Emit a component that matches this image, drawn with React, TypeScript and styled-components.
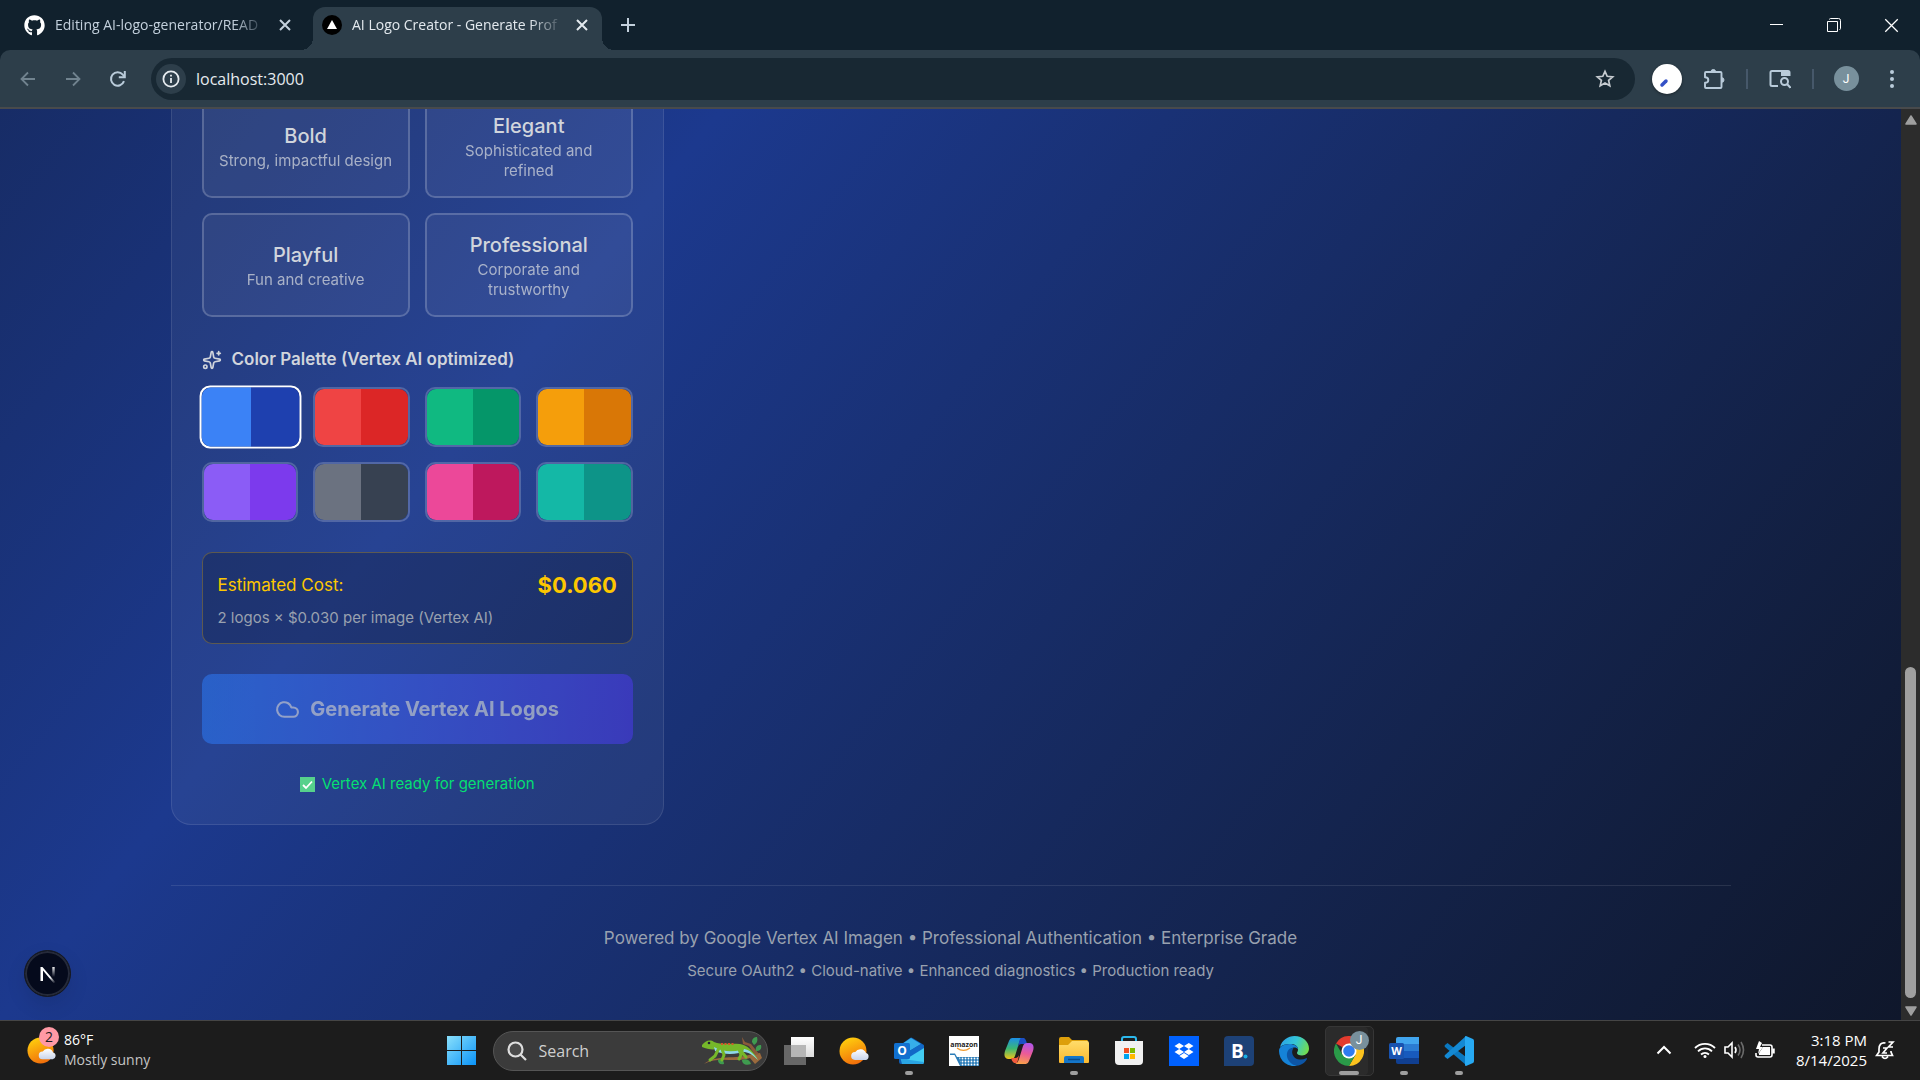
import React from "react";
import styled, { createGlobalStyle, css } from "styled-components";
import { Cloud, Sparkles } from "lucide-react";
import { FaGithub } from "react-icons/fa";

const uiFont = `"Open Sans", "Noto Sans", sans-serif`;
const pageFont = `Inter, "Noto Sans", sans-serif`;

const GlobalStyle = createGlobalStyle`
  *, *::before, *::after { box-sizing: border-box; }
  body { margin: 0; background: #1c1c1c; font-family: ${uiFont}; }
  button, input { font: inherit; color: inherit; margin: 0; padding: 0; border: 0; background: none; }
  svg { display: block; flex: none; }
  p, h2, h3 { margin: 0; font-weight: inherit; font-size: inherit; }
`;

const Screen = styled.div`
  display: flex;
  flex-direction: column;
  height: 100vh;
  overflow: hidden;
`;

/* ---------- Browser chrome ---------- */

const TabStrip = styled.header`
  display: flex;
  align-items: stretch;
  height: 50px;
  background: #11212d;
  color: #c3d0dc;
`;

const Tab = styled.div<{ $active?: boolean }>`
  position: relative;
  display: flex;
  align-items: center;
  gap: 10px;
  width: ${(p) => (p.$active ? 289 : 301)}px;
  margin: ${(p) => (p.$active ? "7px 0 0 0" : "0 0 0 12px")};
  padding: ${(p) => (p.$active ? "0 12px 7px 9px" : "0 20px 0 12px")};
  border-radius: 12px 12px 0 0;
  font-size: 14px;
  line-height: 20px;
  ${(p) =>
    p.$active &&
    css`
      background: #2d3e4a;
      color: #e3e9ee;
      &::before,
      &::after {
        content: "";
        position: absolute;
        bottom: 0;
        width: 12px;
        height: 12px;
      }
      &::before {
        right: 100%;
        background: radial-gradient(circle at 0 0, transparent 12px, #2d3e4a 12px);
      }
      &::after {
        left: 100%;
        background: radial-gradient(circle at 100% 0, transparent 12px, #2d3e4a 12px);
      }
    `}
`;

const TabTitle = styled.span`
  flex: 1;
  overflow: hidden;
  white-space: nowrap;
  mask-image: linear-gradient(to right, #000 84%, transparent);
`;

const PlainButton = styled.button<{ $w?: number }>`
  display: flex;
  align-items: center;
  justify-content: center;
  flex: none;
  width: ${(p) => p.$w ?? 30}px;
  height: 30px;
`;

const NewTab = styled(PlainButton)`
  align-self: center;
  margin-left: 11px;
`;

const WindowControls = styled.div`
  display: flex;
  align-items: center;
  margin-left: auto;
  color: #ffffff;
`;

const ToolbarFrame = styled.div`
  flex: none;
  background: #11212d;
`;

const Toolbar = styled.nav`
  display: flex;
  align-items: center;
  gap: 17px;
  height: 59px;
  padding: 0 14px 0 5px;
  border-bottom: 2px solid #484a4c;
  border-radius: 10px 10px 0 0;
  background: #2d3e4a;
  color: #b9cbda;
`;

const NavGroup = styled.div`
  display: flex;
  margin-right: -6px;
`;

const AddressBar = styled.div`
  display: flex;
  flex: 1;
  align-items: center;
  height: 42px;
  padding: 0 15px 0 5px;
  border-radius: 21px;
  background: #182833;
  color: #e6ebef;
`;

const SiteInfo = styled(PlainButton)`
  border-radius: 15px;
  background: #2d3e4a;
`;

const UrlInput = styled.input`
  flex: 1;
  min-width: 0;
  height: 30px;
  padding-left: 10px;
  outline: none;
  font-size: 16px;
`;

const Divider = styled.span`
  width: 2px;
  height: 20px;
  background: #46586a;
`;

const ExtensionButton = styled(PlainButton)`
  border-radius: 15px;
  background: #ffffff;
  box-shadow: 0 1px 3px rgba(0, 0, 0, 0.4);
`;

const Avatar = styled.span`
  display: flex;
  align-items: center;
  justify-content: center;
  width: 25px;
  height: 25px;
  border-radius: 50%;
  background: #78909c;
  color: #ffffff;
  font: 12px/20px Roboto, sans-serif;
`;

/* ---------- Web page ---------- */

const Viewport = styled.div`
  display: flex;
  flex: 1;
  min-height: 0;
`;

const Page = styled.main`
  position: relative;
  display: flex;
  flex: 1;
  flex-direction: column;
  justify-content: flex-end;
  overflow: hidden;
  background: #0f172b linear-gradient(to bottom right in oklab, #0f172b, #1c398e, #0f172b) bottom / 100%
    2396px no-repeat;
  font-family: ${pageFont};
  color: #d1d5dc;
`;

const Container = styled.div`
  width: 100%;
  max-width: 1600px;
  margin: 0 auto;
  padding: 0 20px;
`;

const Columns = styled.div`
  display: grid;
  grid-template-columns: repeat(3, 1fr);
  gap: 40px;
`;

const Card = styled.section`
  display: flex;
  flex-direction: column;
  gap: 30px;
  padding: 30px;
  border: 1px solid rgba(255, 255, 255, 0.1);
  border-radius: 20px;
  background: rgba(255, 255, 255, 0.05);
`;

const StyleGrid = styled.div`
  display: grid;
  grid-template-columns: repeat(2, 1fr);
  grid-auto-rows: 1fr;
  gap: 15px;
`;

const StyleTile = styled.button`
  padding: 15px 12px;
  border: 2px solid rgba(255, 255, 255, 0.2);
  border-radius: 10px;
  background: rgba(255, 255, 255, 0.05);
  text-align: center;
`;

const TileName = styled.span`
  display: block;
  font-size: 20px;
  font-weight: 500;
  line-height: 30px;
`;

const TileNote = styled.span`
  display: block;
  font-size: 15px;
  line-height: 20px;
  opacity: 0.75;
`;

const PaletteSection = styled.div`
  display: flex;
  flex-direction: column;
  gap: 15px;
`;

const PaletteTitle = styled.h3`
  display: flex;
  align-items: center;
  gap: 10px;
  font-size: 17px;
  font-weight: 600;
  line-height: 25px;
`;

const Swatches = styled.div`
  display: grid;
  grid-template-columns: repeat(4, 1fr);
  gap: 15px;
`;

const Swatch = styled.button<{ $selected: boolean }>`
  height: 60px;
  border: 2px solid ${(p) => (p.$selected ? "#ffffff" : "rgba(255, 255, 255, 0.2)")};
  border-radius: 10px;
  transform: ${(p) => (p.$selected ? "scale(1.05)" : "none")};
`;

const SwatchFill = styled.span<{ $from: string; $to: string }>`
  display: block;
  height: 100%;
  border-radius: 9px;
  background: linear-gradient(to right, ${(p) => p.$from} 50%, ${(p) => p.$to} 50%);
`;

const CostBox = styled.div`
  display: flex;
  flex-direction: column;
  gap: 5px;
  padding: 15px;
  border: 1px solid rgba(240, 177, 0, 0.3);
  border-radius: 10px;
  background: rgba(0, 0, 0, 0.2);
`;

const CostRow = styled.div`
  display: flex;
  align-items: center;
  justify-content: space-between;
  color: #fdc700;
  line-height: 35px;
`;

const CostLabel = styled.span`
  font-size: 17px;
`;

const CostValue = styled.strong`
  font-size: 22px;
  font-weight: 700;
`;

const CostNote = styled.p`
  font-size: 15px;
  line-height: 20px;
  color: #99a1af;
`;

const GenerateButton = styled.button`
  display: flex;
  align-items: center;
  justify-content: center;
  gap: 10px;
  padding: 20px;
  border-radius: 10px;
  background: linear-gradient(to right in oklab, #2b7fff, #4f39f6);
  color: #ffffff;
  font-size: 20px;
  font-weight: 700;
  line-height: 30px;
  opacity: 0.5;
`;

const ReadyNote = styled.p`
  display: flex;
  align-items: center;
  justify-content: center;
  gap: 7px;
  font-size: 15px;
  line-height: 20px;
  color: #05df72;
`;

const Footer = styled.footer`
  display: flex;
  flex-direction: column;
  gap: 10px;
  margin-top: 60px;
  padding: 40px 0 39px;
  border-top: 1px solid rgba(255, 255, 255, 0.1);
  text-align: center;
  color: #99a1af;
`;

const FooterLead = styled.p`
  font-size: 17px;
  line-height: 25px;
`;

const FooterNote = styled.p`
  font-size: 15px;
  line-height: 20px;
`;

const DevBadge = styled.button`
  position: absolute;
  bottom: 23px;
  left: 24px;
  display: flex;
  align-items: center;
  justify-content: center;
  width: 47px;
  height: 47px;
  border: 1px solid #17191f;
  border-radius: 50%;
  background: #050a1c;
  box-shadow: inset 0 0 0 2px #252a3a, 0 8px 20px rgba(0, 0, 0, 0.1);
`;

const Scrollbar = styled.div`
  display: flex;
  flex-direction: column;
  align-items: center;
  width: 19px;
  padding: 6px 0 4px;
  background: #2c2c2c;
`;

const ScrollTrack = styled.div`
  display: flex;
  flex: 1;
  flex-direction: column;
  justify-content: flex-end;
  margin: 2px 0 8px;
`;

const ScrollThumb = styled.div`
  width: 11px;
  height: 38%;
  border-radius: 6px;
  background: #9f9f9f;
`;

/* ---------- Taskbar ---------- */

const Taskbar = styled.footer`
  display: grid;
  grid-template-columns: 1fr auto 1fr;
  flex: none;
  height: 60px;
  border-top: 1px solid #454545;
  background: #1c1c1c;
  color: #ffffff;
`;

const Weather = styled.button`
  display: flex;
  align-items: center;
  justify-self: start;
  gap: 8px;
  height: 58px;
  padding-left: 27px;
  text-align: left;
  font-size: 14px;
  line-height: 20px;
`;

const WeatherIcon = styled.span`
  position: relative;
`;

const CountBadge = styled.span`
  position: absolute;
  top: -9px;
  left: 12px;
  width: 20px;
  height: 20px;
  border-radius: 50%;
  background: #ff99a4;
  color: #1c1c1c;
  text-align: center;
  font-size: 14px;
`;

const Muted = styled.span`
  display: block;
  color: #c4c4c4;
`;

const Dock = styled.div`
  display: flex;
  align-items: center;
`;

const DockSlot = styled.button<{ $active?: boolean; $running?: boolean }>`
  position: relative;
  display: flex;
  align-items: center;
  justify-content: center;
  width: 49px;
  height: 50px;
  margin: 0 3px;
  border-radius: 5px;
  ${(p) =>
    p.$active &&
    css`
      border: 1px solid #363636;
      background: #2b2b2b;
      box-shadow: inset -5px 0 0 #242424;
    `}
  ${(p) =>
    (p.$active || p.$running) &&
    css`
      &::after {
        content: "";
        position: absolute;
        bottom: ${p.$active ? 0 : 1}px;
        width: ${p.$active ? 20 : 8}px;
        height: 4px;
        border-radius: 2px;
        background: #9e9e9e;
      }
    `}
`;

const ProfileDot = styled(Avatar)`
  position: absolute;
  top: 4px;
  right: 4px;
  width: 19px;
  height: 19px;
  font-size: 12px;
`;

const SearchBox = styled.label`
  display: flex;
  align-items: center;
  width: 275px;
  height: 40px;
  margin: 0 4px;
  padding: 0 4px 0 13px;
  border: 1px solid #555555;
  border-radius: 20px;
  background: #3b3b3b;
`;

const SearchInput = styled.input`
  flex: 1;
  min-width: 0;
  padding-left: 12px;
  outline: none;
  font-size: 16px;
  &::placeholder {
    color: #cfcfcf;
    opacity: 1;
  }
`;

const Tray = styled.div`
  display: flex;
  align-items: center;
  justify-content: flex-end;
  gap: 8px;
  height: 58px;
  padding-right: 25px;
`;

const ChevronButton = styled(PlainButton)`
  margin-right: 14px;
`;

const Clock = styled.time`
  margin-left: 12px;
  text-align: right;
  font-size: 15px;
  line-height: 20px;
`;

/* ---------- Drawings ---------- */

const line = { fill: "none", stroke: "currentColor" } as const;

const CloseIcon = ({ size = 12, weight = 2 }: { size?: number; weight?: number }) => (
  <svg width={size} height={size} viewBox="0 0 12 12" {...line} strokeWidth={weight}>
    <path d="M1 1l10 10M11 1L1 11" />
  </svg>
);

const ArrowIcon = ({ flip }: { flip?: boolean }) => (
  <svg width="16" height="16" viewBox="0 0 16 16" {...line} stroke="#71838f" strokeWidth="1.8">
    <path d={flip ? "M1 8h13M8 1.5L14.5 8 8 14.5" : "M15 8H2M8 1.5L1.5 8 8 14.5"} />
  </svg>
);

const ReloadIcon = () => (
  <svg width="18" height="18" viewBox="0 0 18 18" {...line} strokeWidth="2">
    <path d="M15 11.200A6.700 6.700 0 1 1 13.800 4.600L15.500 6.500" />
    <path d="M15.800 1v6.200h-6" />
  </svg>
);

const InfoIcon = () => (
  <svg width="18" height="18" viewBox="0 0 18 18" {...line} strokeWidth="1.8">
    <circle cx="9" cy="9" r="7.6" />
    <path d="M9 8v5M9 4.8v1.8" />
  </svg>
);

const StarIcon = () => (
  <svg width="20" height="20" viewBox="0 0 20 20" {...line} stroke="#c6cbd0" strokeWidth="1.7">
    <path d="M10 2.300l2.200 5 5.500.5-4.100 3.600 1.200 5.400-4.800-2.900-4.800 2.900 1.200-5.400-4.100-3.600 5.500-.5z" />
  </svg>
);

const PuzzleIcon = () => (
  <svg width="22" height="22" viewBox="0 0 22 22" {...line} strokeWidth="1.9" strokeLinejoin="round">
    <path d="M3 4h14.500q1 0 1 1v14q0 1-1 1H3q-1 0-1-1v-4.200c2.200 0 3.300-1.200 3.300-2.800S4.200 9.200 2 9.200V5q0-1 1-1z" />
    <path d="M8 3.800a2.300 2.300 0 0 1 4.600 0zM18.700 9.700a2.300 2.300 0 0 1 0 4.600z" fill="currentColor" strokeWidth="1" />
  </svg>
);

const TabSearchIcon = () => (
  <svg width="22" height="20" viewBox="0 0 22 20" {...line} strokeWidth="2">
    <path d="M9 17H3a1.500 1.500 0 0 1-1.500-1.500v-12A1.500 1.500 0 0 1 3 2h16a1.500 1.500 0 0 1 1.500 1.500V7" />
    <path d="M12 2h8.500v5H12z" fill="currentColor" stroke="none" />
    <circle cx="15.500" cy="12.500" r="3.500" />
    <path d="M18 15l3.500 3.800" />
  </svg>
);

const DotsIcon = () => (
  <svg width="6" height="20" viewBox="0 0 6 20" fill="currentColor">
    <circle cx="3" cy="3" r="2" />
    <circle cx="3" cy="10" r="2" />
    <circle cx="3" cy="17" r="2" />
  </svg>
);

const VercelIcon = () => (
  <svg width="20" height="20" viewBox="0 0 20 20">
    <circle cx="10" cy="10" r="10" fill="#000" />
    <path d="M10 5l5 9H5z" fill="#fff" />
  </svg>
);

const Triangle = ({ down }: { down?: boolean }) => (
  <svg width="12" height="10" viewBox="0 0 12 10" fill="#9f9f9f" stroke="#9f9f9f" strokeWidth="1.500" strokeLinejoin="round">
    <path d={down ? "M1 1h10L6 9z" : "M1 9h10L6 1z"} />
  </svg>
);

const CheckEmoji = () => (
  <svg width="15" height="15" viewBox="0 0 15 15">
    <path d="M0 0h15v15H0z" fill="#56d18c" />
    <path d="M3 8l3 3 6-6.500" fill="none" stroke="#fff" strokeWidth="1.800" />
  </svg>
);

const NextMark = () => (
  <svg width="18" height="20" viewBox="0 0 18 20" fill="none">
    <defs>
      <linearGradient id="nd" x1="2" y1="2" x2="16" y2="19" gradientUnits="userSpaceOnUse">
        <stop offset="0.650" stopColor="#fff" />
        <stop offset="1" stopColor="#fff" stopOpacity="0" />
      </linearGradient>
      <linearGradient id="nv" x1="14" y1="2" x2="14" y2="13" gradientUnits="userSpaceOnUse">
        <stop stopColor="#fff" />
        <stop offset="1" stopColor="#fff" stopOpacity="0" />
      </linearGradient>
    </defs>
    <path d="M1.500 17V3h2L17 19h-2.500L4 6.500V17z" fill="url(#nd)" />
    <path d="M13.300 3h2.400v10h-2.400z" fill="url(#nv)" />
  </svg>
);

const SunCloud = ({ size = 30 }: { size?: number }) => (
  <svg width={size} height={size} viewBox="0 0 30 30">
    <defs>
      <linearGradient id="sun" x1="0.300" y1="0" x2="0.700" y2="1">
        <stop stopColor="#ffcf0d" />
        <stop offset="1" stopColor="#f0690b" />
      </linearGradient>
      <linearGradient id="cld" x1="0" y1="0" x2="0" y2="1">
        <stop stopColor="#ffffff" />
        <stop offset="1" stopColor="#c9d4ea" />
      </linearGradient>
    </defs>
    <circle cx="14" cy="15" r="13.500" fill="url(#sun)" />
    <path d="M16 24a4 4 0 0 1 .3-8 6 6 0 0 1 10.700 1 3.600 3.600 0 0 1-.4 7z" fill="url(#cld)" />
  </svg>
);

const WindowsIcon = () => (
  <svg width="29" height="29" viewBox="0 0 29 29">
    <defs>
      <linearGradient id="win" x1="0" y1="0" x2="29" y2="29" gradientUnits="userSpaceOnUse">
        <stop stopColor="#8ae0fb" />
        <stop offset="1" stopColor="#0a93f8" />
      </linearGradient>
    </defs>
    <path d="M0 0h14v14H0zM15 0h14v14H15zM0 15h14v14H0zM15 15h14v14H15z" fill="url(#win)" />
  </svg>
);

const MagnifierIcon = () => (
  <svg width="20" height="20" viewBox="0 0 20 20" {...line} stroke="#dedede" strokeWidth="2.200">
    <circle cx="8.500" cy="8.500" r="7" fill="#4a4a4a" />
    <path d="M13.500 13.500L19 19" />
  </svg>
);

const GeckoIcon = () => (
  <svg width="61" height="30" viewBox="0 0 61 30">
    <path d="M2 28C14 18 34 24 50 18L58 17 60 22 53 28 48 22C34 27 16 20 4 27z" fill="#9a6a3d" />
    <path d="M40 1l3 5 6 2 8 10-4 1-6-9-6-2z" fill="#8b5a3a" />
    <path d="M50 6c0-4 3-5 5-5 1 4 0 6-3 8zM54 15c-1-5 2-6 5-6 1 4-1 6-5 6zM16 24c3-2 6 0 6 4-4 1-6-1-6-4zM40 24c4-2 8 0 9 4-5 2-9 0-9-4z" fill="#3f9b4f" />
    <path d="M0 9c3-4 8-6 12-3 8 3 16 1 26 2 8 2 12 5 18 16-8-7-12-10-19-9-8 2-15 1-22-2-5 1-10 0-15-2z" fill="#76b82a" />
    <path d="M12 11c9 5 18 5 27 3l-2 3c-9 2-17 1-24-2zM42 13c6 1 10 5 14 11-6-6-10-8-15-8z" fill="#8ed7e8" />
    <path d="M17 12l-4 8-5 4M20 13l2 6-2 5M37 13l2 6-2 4M39 15l5 6" fill="none" stroke="#76b82a" strokeWidth="3" strokeLinecap="round" />
    <path d="M19 8h13" stroke="#d4552b" strokeWidth="1.800" strokeDasharray="2 1.500" />
    <circle cx="7" cy="7" r="1.300" fill="#223" />
  </svg>
);

const TaskViewIcon = () => (
  <svg width="30" height="28" viewBox="0 0 30 28">
    <defs>
      <linearGradient id="tv" x1="0" y1="0" x2="0" y2="1">
        <stop stopColor="#ffffff" />
        <stop offset="1" stopColor="#dcdcdc" />
      </linearGradient>
    </defs>
    <path d="M0 8h22v20H0z" fill="#676767" />
    <path d="M7 0h23v20H7z" fill="url(#tv)" />
    <path d="M7 8h15v12H7z" fill="#b6b6b6" />
  </svg>
);

const OutlookIcon = () => (
  <svg width="30" height="28" viewBox="0 0 30 28">
    <path d="M5 9L16 1q1-1 2.500 0L30 8v17a2 2 0 0 1-2 2H7a2 2 0 0 1-2-2z" fill="#0f5db5" />
    <path d="M5 9L17 1l10 6L12 16z" fill="#36aeea" />
    <path d="M12 16L27 7l3 2v3L14 22z" fill="#1269c7" />
    <path d="M14 21l16-10v14q0 2-2 2H8z" fill="#43cdf2" />
    <path d="M6 20l10 3 14 2q0 2-2 2H8z" fill="#2aa5e4" />
    <rect y="6" width="16" height="16" rx="1.500" fill="#1170cf" />
    <text x="8" y="18" textAnchor="middle" fontFamily="Open Sans, sans-serif" fontSize="12" fontWeight="700" fill="#fff">O</text>
  </svg>
);

const AmazonIcon = () => (
  <svg width="30" height="30" viewBox="0 0 30 30">
    <defs>
      <pattern id="dots" width="3" height="3" patternUnits="userSpaceOnUse">
        <circle cx="1.500" cy="1.500" r="0.900" fill="#fff" />
      </pattern>
    </defs>
    <path d="M0 0h30v30H0z" fill="#fff" />
    <text x="15" y="11" textAnchor="middle" fontFamily="Open Sans, sans-serif" fontSize="7" fontWeight="700" fill="#222">amazon</text>
    <path d="M8 12c4 3 9 3 13 0" fill="none" stroke="#f19a2c" strokeWidth="1.300" />
    <path d="M1 17.500h5L8 21h22v9H11L5.500 19H1z" fill="#2a7cb8" />
    <path d="M10 21h20v9H12z" fill="url(#dots)" />
  </svg>
);

const CopilotIcon = () => (
  <svg width="30" height="28" viewBox="0 0 30 28">
    <defs>
      <linearGradient id="cpa" x1="0" y1="0" x2="0" y2="1">
        <stop stopColor="#1c8fe8" />
        <stop offset="0.500" stopColor="#3bb774" />
        <stop offset="1" stopColor="#f0c419" />
      </linearGradient>
      <linearGradient id="cpb" x1="0.600" y1="0" x2="0.400" y2="1">
        <stop stopColor="#b255e8" />
        <stop offset="0.500" stopColor="#ec5b96" />
        <stop offset="1" stopColor="#f9a04a" />
      </linearGradient>
    </defs>
    <path d="M8 1h11q-3 1-4 5l-4 13q-1 3-4 3H4q-5-1-3-8L5 4q1-3 3-3z" fill="url(#cpa)" />
    <path d="M17 1h3q2 1 3 6h-6q-2 0-3 3l1-5q1-4 2-4z" fill="#1b4fc4" />
    <path d="M22 27H11q3-1 4-5l4-13q1-3 4-3h3q5 1 3 8l-4 10q-1 3-3 3z" fill="url(#cpb)" />
    <path d="M13 26h-3q-2-1-3-5h4q3 0 4-3l-1 5q-1 3-1 3z" fill="#ef5a3c" />
  </svg>
);

const FolderIcon = () => (
  <svg width="30" height="27" viewBox="0 0 30 27">
    <defs>
      <linearGradient id="fl" x1="0" y1="0" x2="0" y2="1">
        <stop stopColor="#ffdc6b" />
        <stop offset="1" stopColor="#fbb92f" />
      </linearGradient>
    </defs>
    <path d="M0 2q0-2 2-2h8l3 3h15q1 0 1 2v6H0z" fill="#dd9f0b" />
    <path d="M0 8h9l4-4h15q2 0 2 2v19q0 1-1 1H1q-1 0-1-1z" fill="url(#fl)" />
    <path d="M5 26v-5q0-2 2-2h16q2 0 2 2v5z" fill="#1576c9" />
    <path d="M9 22.500h12" stroke="#0a4c8c" strokeWidth="1.500" />
  </svg>
);

const StoreIcon = () => (
  <svg width="30" height="30" viewBox="0 0 30 30">
    <path d="M8 6V3q0-2 2-2h10q2 0 2 2v3" fill="none" stroke="#2bb8ec" strokeWidth="2" />
    <path d="M1 5h28v20q0 4-4 4H5q-4 0-4-4z" fill="#f1f1f1" />
    <path d="M10 12h5v5h-5z" fill="#f25022" />
    <path d="M16 12h5v5h-5z" fill="#7fba00" />
    <path d="M10 18h5v5h-5z" fill="#00a4ef" />
    <path d="M16 18h5v5h-5z" fill="#ffb900" />
  </svg>
);

const DropboxIcon = () => (
  <svg width="30" height="30" viewBox="0 0 30 30">
    <path d="M0 0h30v30H0z" fill="#0061fe" />
    <path d="M10.200 7l4.800 3-4.800 3-4.700-3zM19.800 7l4.700 3-4.700 3-4.800-3zM10.200 13l4.800 3-4.800 3-4.700-3zM19.800 13l4.700 3-4.700 3-4.800-3zM15 17l4.700 3-4.700 3-4.700-3z" fill="#fff" />
  </svg>
);

const BookingIcon = () => (
  <svg width="30" height="30" viewBox="0 0 30 30">
    <path d="M0 4q0-4 4-4h22q4 0 4 4v22q0 4-4 4H0z" fill="#1d4176" />
    <text x="7" y="22" fontFamily="Open Sans, sans-serif" fontSize="19" fontWeight="700" fill="#fff">B</text>
    <circle cx="21.500" cy="20.500" r="2" fill="#17aee5" />
  </svg>
);

const EdgeIcon = () => (
  <svg width="30" height="30" viewBox="0 0 30 30">
    <defs>
      <linearGradient id="ea" x1="0" y1="0.300" x2="1" y2="0.600">
        <stop stopColor="#2ba3e8" />
        <stop offset="0.500" stopColor="#34c6d6" />
        <stop offset="1" stopColor="#73dc4e" />
      </linearGradient>
    </defs>
    <path d="M1 11C3 4 9 0 15.500 0 24 0 30 6 30 12.500c0 4-3 7-7 7-3 0-5-1-5-2.500 0-1 1-1.500 1-3.500C19 10 16 8 11 8c-4 0-8 1-10 3z" fill="url(#ea)" />
    <path d="M0 15C0 11 4 8 10.500 8c5 0 8.500 2.500 8.500 5-1-1-2.500-1.700-4-1.500-5 .5-7 7.500-4 12.500 2 3.500 5 5.500 8 5.500A15 15 0 0 1 0 15z" fill="#1583d8" />
    <path d="M11 12.500c-4 3-4 8-1 12.500 3 4 7 5.500 11 4 3-1 5.500-3 7-6 .3-.7-.2-1-.8-.7-6 3-13 .7-14-5.300-.2-2 .3-3.700 1.300-5-1-.2-2.500 0-3.500.5z" fill="#0d55a5" />
  </svg>
);

const ChromeIcon = () => (
  <svg width="30" height="30" viewBox="0 0 30 30">
    <path d="M15 15L2 7.500A15 15 0 0 1 28 7.500z" fill="#e33b2e" />
    <path d="M15 15V7.500h13A15 15 0 0 1 15 30l6.500-11.200z" fill="#fcc31e" />
    <path d="M8.500 18.700L2 7.500A15 15 0 0 0 15 30l6.500-11.300z" fill="#2a9a48" />
    <circle cx="15" cy="15" r="7.500" fill="#fff" />
    <circle cx="15" cy="15" r="5.800" fill="#2e7cf0" />
  </svg>
);

const WordIcon = () => (
  <svg width="30" height="28" viewBox="0 0 30 28">
    <path d="M7 2q0-2 2-2h21v7H7z" fill="#41a5ee" />
    <path d="M7 7h23v7H7z" fill="#2b7cd3" />
    <path d="M7 14h23v7H7z" fill="#185abd" />
    <path d="M7 21h23v6H9q-2 0-2-2z" fill="#103f91" />
    <rect y="6" width="15" height="16" rx="1.500" fill="#1853b0" />
    <text x="7.500" y="18" textAnchor="middle" fontFamily="Open Sans, sans-serif" fontSize="11" fontWeight="700" fill="#fff">W</text>
  </svg>
);

const CodeIcon = () => (
  <svg width="30" height="30" viewBox="0 0 30 30">
    <path d="M1 9l2.500-2L22 21v8L1 11q-1-1 0-2z" fill="#0a78c0" />
    <path d="M1 21l2.500 2L22 9V0L1 19q-1 1 0 2z" fill="#1489d3" />
    <path d="M22 0l7 3q1 .5 1 2v20q0 1.500-1 2l-7 3q-1 0-1-1V1q0-1 1-1z" fill="#27a9f2" />
  </svg>
);

const ChevronUpIcon = () => (
  <svg width="16" height="10" viewBox="0 0 16 10" {...line} strokeWidth="2">
    <path d="M1.500 8.500L8 2l6.500 6.500" />
  </svg>
);

const WifiIcon = () => (
  <svg width="22" height="18" viewBox="0 0 22 18" {...line} strokeWidth="1.800">
    <path d="M1 7a14 14 0 0 1 20 0M4 10.300a10 10 0 0 1 14 0M7 13.500a6 6 0 0 1 8 0" />
    <circle cx="11" cy="15.500" r="1.500" fill="currentColor" stroke="none" />
  </svg>
);

const VolumeIcon = () => (
  <svg width="22" height="20" viewBox="0 0 22 20" {...line} strokeWidth="1.600">
    <path d="M1 7h3l4-4v14l-4-4H1z" />
    <path d="M11 7q2 3 0 6" />
    <path d="M14 4.500q4 5.500 0 11M17 2q5 8 0 16" stroke="#6b6b6b" />
  </svg>
);

const BatteryIcon = () => (
  <svg width="22" height="20" viewBox="0 0 22 20" {...line} strokeWidth="1.600">
    <path d="M8 5h8q2 0 2 2v8q0 2-2 2H4q-2 0-2-2v-2" />
    <path d="M9 7h7v8H5v-2z" fill="currentColor" stroke="none" />
    <path d="M19.500 8.500v5" strokeWidth="2.500" />
    <path d="M5 1L2 9h3l-1 5 5-7H6l2-4z" fill="currentColor" stroke="none" />
  </svg>
);

const BellIcon = () => (
  <svg width="20" height="20" viewBox="0 0 20 20" {...line} strokeWidth="1.700">
    <path d="M10.500 3C6 2 4 5 4 9v3l-2.500 3.500h16L16 12v-1M7 16.500q3 4 6 0" />
    <path d="M8 8h4l-4 5h4M13.500 2H18l-4.500 5H18" />
  </svg>
);

/* ---------- Data ---------- */

const styles = [
  ["Bold", "Strong, impactful design"],
  ["Elegant", "Sophisticated and refined"],
  ["Playful", "Fun and creative"],
  ["Professional", "Corporate and trustworthy"],
];

const palettes = [
  ["Blue", "#3b82f6", "#1e40af"],
  ["Red", "#ef4444", "#dc2626"],
  ["Green", "#10b981", "#059669"],
  ["Orange", "#f59e0b", "#d97706"],
  ["Purple", "#8b5cf6", "#7c3aed"],
  ["Gray", "#6b7280", "#374151"],
  ["Pink", "#ec4899", "#be185d"],
  ["Teal", "#14b8a6", "#0d9488"],
];

const apps: { name: string; icon: React.ReactNode; running?: boolean; active?: boolean }[] = [
  { name: "Task view", icon: <TaskViewIcon /> },
  { name: "Weather", icon: <SunCloud /> },
  { name: "Outlook", icon: <OutlookIcon />, running: true },
  { name: "Amazon", icon: <AmazonIcon /> },
  { name: "Copilot", icon: <CopilotIcon /> },
  { name: "File Explorer", icon: <FolderIcon />, running: true },
  { name: "Store", icon: <StoreIcon /> },
  { name: "Dropbox", icon: <DropboxIcon /> },
  { name: "Booking", icon: <BookingIcon /> },
  { name: "Edge", icon: <EdgeIcon /> },
  { name: "Chrome", icon: <ChromeIcon />, active: true },
  { name: "Word", icon: <WordIcon />, running: true },
  { name: "Code", icon: <CodeIcon />, running: true },
];

export default function App() {
  const [selected, setSelected] = React.useState("Blue");

  return (
    <Screen>
      <GlobalStyle />
      <TabStrip>
        <Tab>
          <FaGithub size={21} color="#ffffff" />
          <TabTitle>Editing AI-logo-generator/READ</TabTitle>
          <PlainButton $w={16} aria-label="Close tab">
            <CloseIcon />
          </PlainButton>
        </Tab>
        <Tab $active>
          <VercelIcon />
          <TabTitle>AI Logo Creator - Generate Prof</TabTitle>
          <PlainButton $w={16} aria-label="Close tab">
            <CloseIcon />
          </PlainButton>
        </Tab>
        <NewTab aria-label="New tab">
          <svg width="14" height="14" viewBox="0 0 14 14" {...line} strokeWidth="2">
            <path d="M7 0v14M0 7h14" />
          </svg>
        </NewTab>
        <WindowControls>
          <PlainButton $w={57} aria-label="Minimize">
            <svg width="13" height="13" viewBox="0 0 13 13" {...line}>
              <path d="M0 5.500h13" />
            </svg>
          </PlainButton>
          <PlainButton $w={57} aria-label="Restore">
            <svg width="14" height="14" viewBox="0 0 14 14" {...line}>
              <path d="M.5 3.500h10v10H.5zM2.500 1.500q0-1 1-1h8q2 0 2 2v8q0 1-1 1" />
            </svg>
          </PlainButton>
          <PlainButton $w={58} aria-label="Close window">
            <CloseIcon size={15} weight={1} />
          </PlainButton>
        </WindowControls>
      </TabStrip>

      <ToolbarFrame>
        <Toolbar>
          <NavGroup>
            <PlainButton $w={45} aria-label="Back">
              <ArrowIcon />
            </PlainButton>
            <PlainButton $w={45} aria-label="Forward">
              <ArrowIcon flip />
            </PlainButton>
            <PlainButton $w={45} aria-label="Reload">
              <ReloadIcon />
            </PlainButton>
          </NavGroup>
          <AddressBar>
            <SiteInfo aria-label="Site information">
              <InfoIcon />
            </SiteInfo>
            <UrlInput aria-label="Address" defaultValue="localhost:3000" />
            <PlainButton aria-label="Bookmark">
              <StarIcon />
            </PlainButton>
          </AddressBar>
          <ExtensionButton aria-label="Extension">
            <svg width="30" height="30" viewBox="0 0 30 30">
              <path d="M10 21l4-4" stroke="#3451c6" strokeWidth="3.500" strokeLinecap="round" />
            </svg>
          </ExtensionButton>
          <PlainButton aria-label="Extensions">
            <PuzzleIcon />
          </PlainButton>
          <Divider />
          <PlainButton aria-label="Search tabs">
            <TabSearchIcon />
          </PlainButton>
          <Divider />
          <PlainButton aria-label="Profile">
            <Avatar>J</Avatar>
          </PlainButton>
          <PlainButton $w={28} aria-label="Menu">
            <DotsIcon />
          </PlainButton>
        </Toolbar>
      </ToolbarFrame>

      <Viewport>
        <Page>
          <Container>
            <Columns>
              <Card>
                <StyleGrid>
                  {styles.map(([name, note]) => (
                    <StyleTile key={name}>
                      <TileName>{name}</TileName>
                      <TileNote>{note}</TileNote>
                    </StyleTile>
                  ))}
                </StyleGrid>
                <PaletteSection>
                  <PaletteTitle>
                    <Sparkles size={20} />
                    Color Palette (Vertex AI optimized)
                  </PaletteTitle>
                  <Swatches>
                    {palettes.map(([name, from, to]) => (
                      <Swatch
                        key={name}
                        $selected={name === selected}
                        aria-label={name}
                        aria-pressed={name === selected}
                        onClick={() => setSelected(name)}
                      >
                        <SwatchFill $from={from} $to={to} />
                      </Swatch>
                    ))}
                  </Swatches>
                </PaletteSection>
                <CostBox>
                  <CostRow>
                    <CostLabel>Estimated Cost:</CostLabel>
                    <CostValue>$0.060</CostValue>
                  </CostRow>
                  <CostNote>2 logos × $0.030 per image (Vertex AI)</CostNote>
                </CostBox>
                <GenerateButton>
                  <Cloud size={25} />
                  Generate Vertex AI Logos
                </GenerateButton>
                <ReadyNote>
                  <CheckEmoji />
                  Vertex AI ready for generation
                </ReadyNote>
              </Card>
            </Columns>
            <Footer>
              <FooterLead>
                Powered by Google Vertex AI Imagen • Professional Authentication • Enterprise Grade
              </FooterLead>
              <FooterNote>
                Secure OAuth2 • Cloud-native • Enhanced diagnostics • Production ready
              </FooterNote>
            </Footer>
          </Container>
          <DevBadge aria-label="Next.js dev tools">
            <NextMark />
          </DevBadge>
        </Page>
        <Scrollbar>
          <Triangle />
          <ScrollTrack>
            <ScrollThumb />
          </ScrollTrack>
          <Triangle down />
        </Scrollbar>
      </Viewport>

      <Taskbar>
        <Weather>
          <WeatherIcon>
            <SunCloud size={29} />
            <CountBadge>2</CountBadge>
          </WeatherIcon>
          <span>
            86°F
            <Muted>Mostly sunny</Muted>
          </span>
        </Weather>
        <Dock>
          <DockSlot aria-label="Start">
            <WindowsIcon />
          </DockSlot>
          <SearchBox>
            <MagnifierIcon />
            <SearchInput placeholder="Search" aria-label="Search" />
            <GeckoIcon />
          </SearchBox>
          {apps.map((app) => (
            <DockSlot key={app.name} aria-label={app.name} $active={app.active} $running={app.running}>
              {app.icon}
              {app.active && <ProfileDot>J</ProfileDot>}
            </DockSlot>
          ))}
        </Dock>
        <Tray>
          <ChevronButton $w={16} aria-label="Hidden icons">
            <ChevronUpIcon />
          </ChevronButton>
          <WifiIcon />
          <VolumeIcon />
          <BatteryIcon />
          <Clock>
            3:18 PM
            <br />
            8/14/2025
          </Clock>
          <BellIcon />
        </Tray>
      </Taskbar>
    </Screen>
  );
}
